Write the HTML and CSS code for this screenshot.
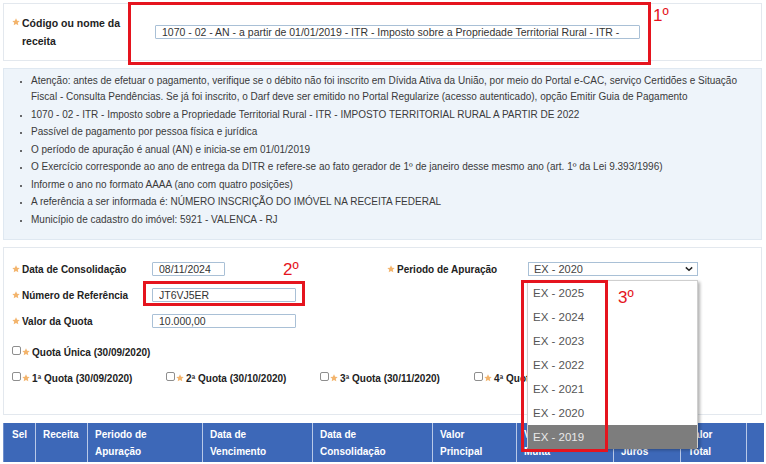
FILE: index.html
```html
<!DOCTYPE html>
<html lang="pt-BR">
<head>
<meta charset="utf-8">
<title>Pagamento - DARF</title>
<link rel="stylesheet" href="styles.css">
</head>
<body>
<div class="page">
  <svg width="0" height="0" class="defs">
    <defs>
      <symbol id="star" viewBox="0 0 10 10">
        <path d="M5 0.4l1.4 3 3.2 0.3-2.4 2.1 0.7 3.2L5 7.4 2.1 9l0.7-3.2L0.4 3.7l3.2-0.3z" fill="#f3b46c"/>
      </symbol>
    </defs>
  </svg>

  <section class="panel receita">
    <div class="receita-label">
      <svg class="star"><use href="#star"/></svg>
      <span>Código ou nome da receita</span>
    </div>
    <input class="field field-receita" value="1070 - 02 - AN - a partir de 01/01/2019 - ITR - Imposto sobre a Propriedade Territorial Rural - ITR -" readonly>
  </section>

  <section class="info">
    <ul>
      <li>Atenção: antes de efetuar o pagamento, verifique se o débito não foi inscrito em Dívida Ativa da União, por meio do Portal e-CAC, serviço Certidões e Situação Fiscal - Consulta Pendências. Se já foi inscrito, o Darf deve ser emitido no Portal Regularize (acesso autenticado), opção Emitir Guia de Pagamento</li>
      <li>1070 - 02 - ITR - Imposto sobre a Propriedade Territorial Rural - ITR - IMPOSTO TERRITORIAL RURAL A PARTIR DE 2022</li>
      <li>Passível de pagamento por pessoa física e jurídica</li>
      <li>O período de apuração é anual (AN) e inicia-se em 01/01/2019</li>
      <li>O Exercício corresponde ao ano de entrega da DITR e refere-se ao fato gerador de 1º de janeiro desse mesmo ano (art. 1º da Lei 9.393/1996)</li>
      <li>Informe o ano no formato AAAA (ano com quatro posições)</li>
      <li>A referência a ser informada é: NÚMERO INSCRIÇÃO DO IMÓVEL NA RECEITA FEDERAL</li>
      <li>Município de cadastro do imóvel: 5921 - VALENCA - RJ</li>
    </ul>
  </section>

  <section class="panel form">
    <div class="form-cols">
      <div class="col-left">
        <div class="row">
          <label class="lbl"><svg class="star"><use href="#star"/></svg>Data de Consolidação</label>
          <input class="field field-short" value="08/11/2024" readonly>
        </div>
        <div class="row">
          <label class="lbl"><svg class="star"><use href="#star"/></svg>Número de Referência</label>
          <input class="field field-mid" value="JT6VJ5ER" readonly>
        </div>
        <div class="row">
          <label class="lbl"><svg class="star"><use href="#star"/></svg>Valor da Quota</label>
          <input class="field field-mid" value="10.000,00" readonly>
        </div>
      </div>
      <div class="col-right">
        <div class="row">
          <label class="lbl lbl-right"><svg class="star"><use href="#star"/></svg>Periodo de Apuração</label>
          <div class="select">
            <span>EX - 2020</span>
            <svg class="chevron" viewBox="0 0 10 6"><path d="M1 1l4 3.5L9 1" fill="none" stroke="#222" stroke-width="1.8"/></svg>
          </div>
        </div>
      </div>
    </div>
    <div class="checks">
      <div class="check-row">
        <span class="check"><span class="box"></span><svg class="star"><use href="#star"/></svg>Quota Única (30/09/2020)</span>
      </div>
      <div class="check-row quotas">
        <span class="check"><span class="box"></span><svg class="star"><use href="#star"/></svg>1ª Quota (30/09/2020)</span>
        <span class="check"><span class="box"></span><svg class="star"><use href="#star"/></svg>2ª Quota (30/10/2020)</span>
        <span class="check"><span class="box"></span><svg class="star"><use href="#star"/></svg>3ª Quota (30/11/2020)</span>
        <span class="check"><span class="box"></span><svg class="star"><use href="#star"/></svg>4ª Quota (30/12/2020)</span>
      </div>
    </div>
  </section>

  <table class="grid">
    <colgroup>
      <col style="width:32px"><col style="width:52px"><col style="width:115px"><col style="width:110px"><col style="width:120px"><col style="width:84px"><col style="width:97px"><col style="width:67px"><col style="width:66px"><col style="width:17px">
    </colgroup>
    <thead>
      <tr>
        <th>Sel</th>
        <th>Receita</th>
        <th>Periodo de<br>Apuração</th>
        <th>Data de<br>Vencimento</th>
        <th>Data de<br>Consolidação</th>
        <th>Valor<br>Principal</th>
        <th>Valor<br>Multa</th>
        <th>Valor<br>Juros</th>
        <th>Valor<br>Total</th>
        <th></th>
      </tr>
    </thead>
  </table>

  <!-- open list of the Periodo de Apuração select -->
  <ul class="options">
    <li>EX - 2025</li>
    <li>EX - 2024</li>
    <li>EX - 2023</li>
    <li>EX - 2022</li>
    <li>EX - 2021</li>
    <li>EX - 2020</li>
    <li class="hover">EX - 2019</li>
  </ul>

  <!-- step markers -->
  <div class="mark mark-1"></div>
  <div class="mark mark-2"></div>
  <div class="mark mark-3"></div>
  <span class="step step-1">1º</span>
  <span class="step step-2">2º</span>
  <span class="step step-3">3º</span>
</div>
</body>
</html>
```

FILE: styles.css
```css
* { box-sizing: border-box; }

html, body {
  margin: 0;
  padding: 0;
  background: #ffffff;
}

body {
  font-family: "Liberation Sans", Arial, sans-serif;
  font-size: 10px;
  color: #333;
}

.defs { position: absolute; }

.page {
  position: relative;
  width: 766px;
  height: 464px;
  padding: 3px 4px 0 3px;
  overflow: hidden;
}

.star {
  width: 8px;
  height: 8px;
  flex: none;
  margin-right: 2px;
}

.panel {
  border: 1px solid #e3e8ee;
  background: #fff;
}

/* Receita panel */
.receita {
  height: 58px;
  display: flex;
  align-items: center;
}

.receita-label {
  width: 151px;
  padding-left: 8px;
  display: flex;
  align-items: flex-start;
  font-weight: bold;
  font-size: 10.5px;
  line-height: 18px;
  color: #222;
}

.receita-label .star { margin-top: 4px; }

.receita-label span { width: 100px; }

.field {
  font-family: "Liberation Sans", Arial, sans-serif;
  font-size: 10.5px;
  color: #333;
  height: 14px;
  padding: 0 6px;
  border: 1px solid #a9c0d6;
  border-radius: 1px;
  background: #fff;
  outline: none;
}

.field-receita { width: 485px; }
.field-short { width: 73px; }
.field-mid { width: 144px; }

/* Info box */
.info {
  margin-top: 7px;
  background: #eef4fa;
  border: 1px solid #dfe8f1;
  padding: 4px 0 10px;
}

.info ul {
  margin: 0;
  padding-left: 27px;
  list-style: disc;
}

.info li {
  font-size: 10px;
  line-height: 16px;
  margin-bottom: 1.5px;
  color: #3a3a3a;
  padding-right: 8px;
}

.info li::marker { font-size: 8px; }

/* Form */
.form {
  margin-top: 7px;
  padding: 8px 0 23px;
}

.form-cols {
  display: flex;
}

.col-left { width: 379px; }

.row {
  height: 26px;
  display: flex;
  align-items: center;
}

.lbl {
  display: flex;
  align-items: center;
  font-weight: bold;
  font-size: 10px;
  color: #222;
  padding-left: 8px;
  width: 148px;
}

.lbl-right {
  padding-left: 4px;
  width: 145px;
}

.select {
  width: 170px;
  height: 14px;
  border: 1px solid #a9c0d6;
  display: flex;
  align-items: center;
  justify-content: space-between;
  padding: 0 4px 0 5px;
  font-size: 11px;
  color: #444;
}

.chevron { width: 8px; height: 6px; }

.checks { margin-top: 5px; }

.check-row {
  height: 26px;
  display: flex;
  align-items: center;
  padding-left: 8px;
}

.check {
  display: flex;
  align-items: center;
  font-weight: bold;
  font-size: 10px;
  color: #222;
  white-space: nowrap;
}

.quotas .check { width: 154px; }

.box {
  width: 9px;
  height: 9px;
  border: 1px solid #8e8e8e;
  border-radius: 2px;
  margin-right: 1px;
  margin-top: -4px;
  background: #fff;
}

/* Result table header */
.grid {
  margin-top: 8px;
  width: 760px;
  border-collapse: collapse;
  table-layout: fixed;
}

.grid th {
  background: #3d68b8;
  color: #fff;
  font-size: 10px;
  font-weight: bold;
  text-align: left;
  vertical-align: top;
  line-height: 17px;
  height: 39px;
  padding: 3px 7px 0;
  border-left: 1px solid #b9c9e8;
  white-space: nowrap;
}

.grid th:first-child {
  padding-left: 8px;
  border-left: 1px solid #6f8fcc;
}

/* Open dropdown list */
.options {
  position: absolute;
  left: 527px;
  top: 280px;
  width: 171px;
  height: 168px;
  margin: 0;
  padding: 0;
  list-style: none;
  background: #fff;
  border: 1px solid #cfcfcf;
  box-shadow: 2px 2px 3px rgba(0, 0, 0, 0.3);
  z-index: 2;
}

.options li {
  height: 24px;
  line-height: 24px;
  padding-left: 5px;
  font-size: 11.5px;
  color: #555;
}

.options li.hover {
  background: #7d7d7d;
  color: #e9e9e9;
}

/* Step markers */
.mark {
  position: absolute;
  border: 3px solid #e5141e;
  z-index: 3;
}

.mark-1 { left: 128px; top: 2px; width: 523px; height: 63px; }
.mark-2 { left: 143px; top: 281px; width: 162px; height: 25px; }
.mark-3 { left: 521px; top: 280px; width: 87px; height: 172px; }

.step {
  position: absolute;
  z-index: 3;
  color: #e5141e;
  font-family: "Liberation Sans", Arial, sans-serif;
  font-size: 17px;
  line-height: 1;
}

.step-1 { left: 653px; top: 7px; }
.step-2 { left: 283px; top: 261px; }
.step-3 { left: 618px; top: 289px; }
```
